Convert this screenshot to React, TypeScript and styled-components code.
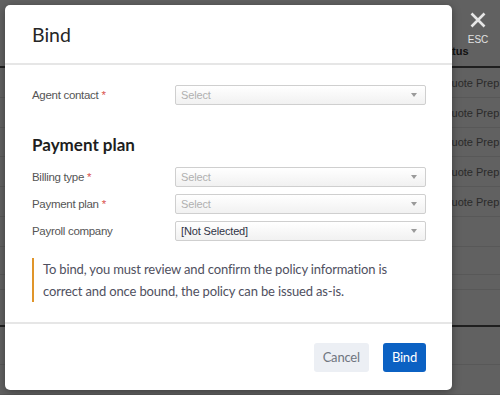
import styled, { createGlobalStyle } from "styled-components";

const GlobalStyle = createGlobalStyle`
  html, body {
    margin: 0;
    padding: 0;
    overflow: hidden;
  }
  * {
    box-sizing: border-box;
  }
`;

const Page = styled.div`
  position: relative;
  width: 500px;
  height: 395px;
  background: #616161;
  overflow: hidden;
  font-family: "Liberation Sans", Arial, sans-serif;
`;

const BgTable = styled.div`
  display: flex;
  flex-direction: column;
`;

const BgHeader = styled.div`
  height: 68px;
  display: flex;
  align-items: flex-end;
  padding: 0 0 9px 435px;
  border-bottom: 2px solid #1f1f1f;
  font-size: 11px;
  font-weight: 700;
  color: #111;
`;

const BgRow = styled.div<{ $h: number; $dark?: boolean }>`
  height: ${(p) => p.$h}px;
  display: flex;
  align-items: center;
  padding-left: 443px;
  border-bottom: ${(p) => (p.$dark ? "2px solid #1f1f1f" : "1px solid #585858")};
  font-size: 11px;
  color: #2a2a2a;
  white-space: nowrap;
`;

const CloseButton = styled.div`
  position: absolute;
  top: 12px;
  left: 465px;
  width: 26px;
  display: flex;
  flex-direction: column;
  align-items: center;
  gap: 6px;
  color: #e2e2e2;
  font-size: 10px;
`;

const Modal = styled.div`
  position: absolute;
  left: 5px;
  top: 5px;
  width: 447px;
  height: 385px;
  background: #fff;
  border-radius: 5px;
  box-shadow: 0 2px 8px rgba(0, 0, 0, 0.35);
  display: flex;
  flex-direction: column;
`;

const Header = styled.div`
  height: 60px;
  display: flex;
  align-items: center;
  padding: 0 27px;
  border-bottom: 2px solid #e6e6e6;
`;

const Title = styled.h1`
  margin: 0;
  font-family: Lato, "Open Sans", sans-serif;
  font-weight: 400;
  font-size: 19.5px;
  color: #262626;
`;

const Body = styled.div`
  flex: 1;
  padding: 20px 26px 0 27px;
  border-bottom: 2px solid #e6e6e6;
`;

const Section = styled.h2`
  margin: 28px 0 10px;
  font-family: Lato, "Open Sans", sans-serif;
  font-weight: 700;
  font-size: 17px;
  line-height: 24px;
  color: #1e1e1e;
`;

const Rows = styled.div`
  display: flex;
  flex-direction: column;
  gap: 7px;
`;

const Row = styled.div`
  display: flex;
  align-items: center;
  height: 20px;
`;

const Label = styled.div`
  width: 143px;
  font-size: 11.5px;
  letter-spacing: -0.3px;
  color: #555;
`;

const Required = styled.span`
  color: #d9534f;
  margin-left: 3px;
`;

const SelectBox = styled.div<{ $placeholder?: boolean }>`
  flex: 1;
  height: 20px;
  display: flex;
  align-items: center;
  justify-content: space-between;
  padding: 0 8px 0 5px;
  border: 1px solid #cfcfcf;
  border-radius: 2px;
  background: linear-gradient(#ffffff, #f1f1f1);
  font-size: 11px;
  letter-spacing: -0.15px;
  color: ${(p) => (p.$placeholder ? "#b0b0b0" : "#2f3345")};
`;

const Caret = styled.span`
  width: 0;
  height: 0;
  border-left: 3.5px solid transparent;
  border-right: 3.5px solid transparent;
  border-top: 4px solid #9a9a9a;
`;

const Notice = styled.div`
  margin-top: 17px;
  padding: 0 0 0 9px;
  border-left: 2px solid #e0952a;
  font-family: Lato, "Open Sans", sans-serif;
  font-size: 13px;
  letter-spacing: -0.15px;
  line-height: 22px;
  color: #4f5060;
`;

const Footer = styled.div`
  height: 66px;
  display: flex;
  align-items: center;
  justify-content: flex-end;
  gap: 14px;
  padding: 0 26px 0 0;
`;

const Button = styled.button<{ $primary?: boolean }>`
  height: 29px;
  padding: 0 9px;
  border: none;
  border-radius: 3px;
  font-family: Lato, "Open Sans", sans-serif;
  font-size: 13px;
  letter-spacing: -0.2px;
  cursor: pointer;
  background: ${(p) => (p.$primary ? "#0b61c3" : "#eceff4")};
  color: ${(p) => (p.$primary ? "#fff" : "#6f7580")};
`;

const bgRows: { h: number; text?: string; dark?: boolean }[] = [
  { h: 30, text: "Quote Prep" },
  { h: 30, text: "Quote Prep" },
  { h: 29, text: "Quote Prep" },
  { h: 30, text: "Quote Prep" },
  { h: 30, text: "Quote Prep" },
  { h: 30 },
  { h: 28 },
  { h: 15 },
  { h: 37, dark: true },
  { h: 38 },
  { h: 30 },
];

function SelectField({ value, placeholder }: { value?: string; placeholder?: string }) {
  return (
    <SelectBox $placeholder={!value}>
      <span>{value || placeholder}</span>
      <Caret />
    </SelectBox>
  );
}

export default function App() {
  return (
    <Page>
      <GlobalStyle />
      <BgTable>
        <BgHeader>Status</BgHeader>
        {bgRows.map((r, i) => (
          <BgRow key={i} $h={r.h} $dark={r.dark}>
            {r.text}
          </BgRow>
        ))}
      </BgTable>

      <CloseButton>
        <svg width="16" height="16" viewBox="0 0 16 16">
          <path d="M1.5 1.5 L14.5 14.5 M14.5 1.5 L1.5 14.5" stroke="#e6e6e6" strokeWidth="2.6" />
        </svg>
        <span>ESC</span>
      </CloseButton>

      <Modal>
        <Header>
          <Title>Bind</Title>
        </Header>
        <Body>
          <Row>
            <Label>
              Agent contact<Required>*</Required>
            </Label>
            <SelectField placeholder="Select" />
          </Row>

          <Section>Payment plan</Section>
          <Rows>
            <Row>
              <Label>
                Billing type<Required>*</Required>
              </Label>
              <SelectField placeholder="Select" />
            </Row>
            <Row>
              <Label>
                Payment plan<Required>*</Required>
              </Label>
              <SelectField placeholder="Select" />
            </Row>
            <Row>
              <Label>Payroll company</Label>
              <SelectField value="[Not Selected]" />
            </Row>
          </Rows>

          <Notice>
            To bind, you must review and confirm the policy information is
            correct and once bound, the policy can be issued as-is.
          </Notice>
        </Body>
        <Footer>
          <Button>Cancel</Button>
          <Button $primary>Bind</Button>
        </Footer>
      </Modal>
    </Page>
  );
}
